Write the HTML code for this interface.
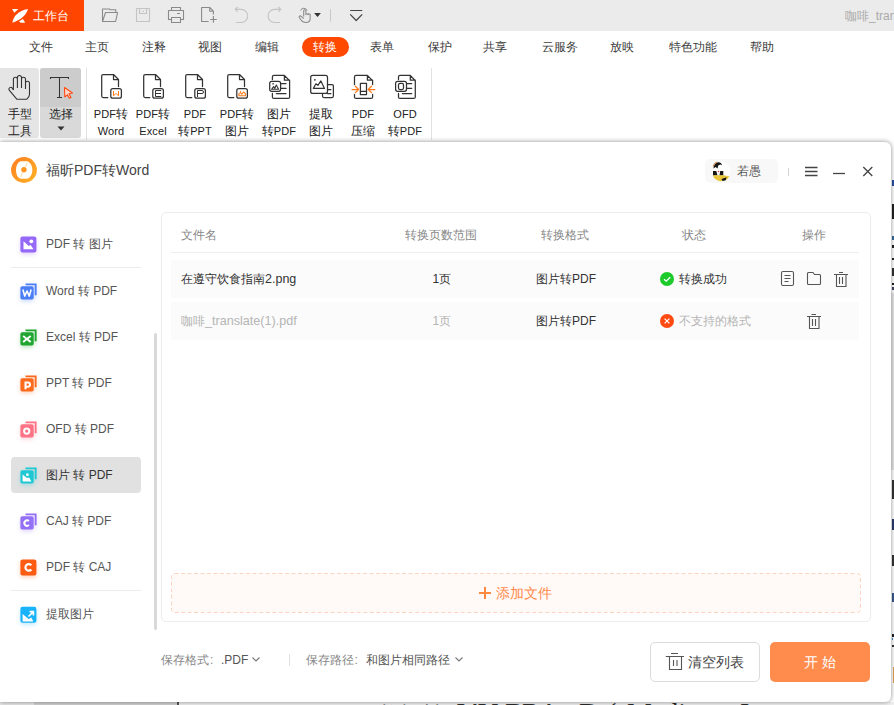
<!DOCTYPE html>
<html><head><meta charset="utf-8">
<style>
*{box-sizing:border-box;margin:0;padding:0}
html,body{width:894px;height:705px;overflow:hidden;background:#fff;font-family:"Liberation Sans",sans-serif;color:#333}
.a{position:absolute}
#tb{left:0;top:0;width:894px;height:31px;background:#ebebeb}
#tab{left:0;top:0;width:84px;height:31px;background:#ff4500;color:#fff;font-size:13px}
#menu{left:0;top:31px;width:894px;height:31px;background:#fff}
.mi{top:38.5px;font-size:12px;line-height:16px;color:#3c3c3c;white-space:nowrap}
#pill{left:301.5px;top:37px;width:47px;height:20px;border-radius:10px;background:#ff4800}
#rib{left:0;top:62px;width:894px;height:80px;background:#fff}
.rt{font-size:12px;line-height:17px;color:#222;text-align:center;white-space:nowrap}
#dlg{left:0;top:142px;width:891px;height:560px;background:#fff;border-radius:0 6px 6px 0;box-shadow:0 0 5px rgba(0,0,0,.45)}
.si{left:20px;width:17px;height:17px;border-radius:3px}
.st{left:46px;font-size:12px;line-height:16px;color:#444;white-space:nowrap}
.th{top:227px;font-size:12px;line-height:16px;color:#888;white-space:nowrap}
.rl{font-size:11px;letter-spacing:0.1px}
.l{font-size:12px;letter-spacing:0}
.td{font-size:12px;line-height:16px;color:#333;white-space:nowrap}
</style></head><body>
<!-- background document strips -->

<!-- title bar -->
<div id="tb" class="a"></div>
<div id="tab" class="a">
  <svg class="a" style="left:0;top:0" width="32" height="31" viewBox="0 0 32 31">
    <path d="M12.1 9.1 H18.3 L14.3 12.8 Z" fill="#fff"/>
    <path d="M12.4 22.8 C13.2 16.5 18 10.8 28 9.1 C26.5 14.5 21.5 19.8 12.4 22.8 Z" fill="#fff"/>
    <path d="M19 21.3 L23 19 L25.2 22.8 H20.5 Z" fill="#fff"/>
  </svg>
  <div class="a" style="left:33px;top:8px;font-size:12px;line-height:17px;color:#fff">工作台</div>
</div>
<svg class="a" style="left:96px;top:4px" width="280" height="24" viewBox="96 4 280 24" fill="none" stroke-linejoin="round">
  <g stroke="#8a8a8a" stroke-width="1.1">
  <path d="M102.5 21.5 V9 H109.3 L110.3 9.8 H115.8 V12.3"/>
  <path d="M102.5 21.5 L105.5 12.5 H117.6 L115.6 21.5 Z"/>
  <path d="M171.5 10.5 V7.5 H180.5 V10.5 M171.5 19.5 H168.5 V10.5 H183.5 V19.5 H180.5 M171.5 17.5 H180.5 V22.5 H171.5 Z M177 13.5 H180"/>
  <path d="M208.7 21.5 H201.6 V7.5 H209.7 L213.4 11.2 V14.5 M209.7 7.5 V11.2 H213.4 M213.4 16 V22.7 M210.2 19.5 H216.8"/>
  </g>
  <g stroke="#c4c4c4" stroke-width="1.1">
  <rect x="136.5" y="8.5" width="13" height="13"/>
  <path d="M139.5 8.5 V13.5 H146.5 V8.5 M142.3 11.2 H144"/>
  <path d="M235.2 9.4 H241.2 A6.55 6.55 0 0 1 241.2 22.5 H236 M237.7 7 L235.2 9.4 L237.7 11.8"/>
  <path d="M280.8 9.4 H274.6 A6.55 6.55 0 0 0 274.6 22.5 H280 M278.3 7 L280.8 9.4 L278.3 11.8"/>
  <path d="M330.5 9.2 V21.7" stroke="#c8c8c8" stroke-width="1"/>
  </g>
  <path d="M300.6 10.5 A3.4 3.4 0 0 1 307 10.5" stroke="#8a8a8a" stroke-width="1"/>
  <path d="M303.7 16.5 V10.8 A1.1 1.1 0 0 1 305.9 10.8 V14.5 A1.1 1.1 0 0 1 308 14.7 A1.1 1.1 0 0 1 310.2 15.5 V18.5 Q310.2 22.5 305.8 22.5 Q302.5 22.5 300.8 19.8 L299.3 17.5 A1.1 1.1 0 0 1 301.2 16.4 L303.7 18.5" stroke="#8a8a8a" stroke-width="1.05"/>
  <path d="M314.1 13 H320.9 L317.5 17.1 Z" fill="#333"/>
  <path d="M350.2 10.5 H362.2 M350.2 14.3 L356.2 20.5 L362.2 14.3" stroke="#444" stroke-width="1.2"/>
</svg>
<div class="a" style="left:845px;top:9px;font-size:12px;line-height:15px;color:#aaa;white-space:nowrap">咖啡_tran</div>

<!-- menu bar -->
<div id="menu" class="a"></div>
<div id="pill" class="a"></div>
<div class="a mi" style="left:28.5px">文件</div>
<div class="a mi" style="left:84.5px">主页</div>
<div class="a mi" style="left:141.5px">注释</div>
<div class="a mi" style="left:198px">视图</div>
<div class="a mi" style="left:255px">编辑</div>
<div class="a mi" style="left:313px;color:#fff">转换</div>
<div class="a mi" style="left:370px">表单</div>
<div class="a mi" style="left:427.5px">保护</div>
<div class="a mi" style="left:483px">共享</div>
<div class="a mi" style="left:541.5px">云服务</div>
<div class="a mi" style="left:610px">放映</div>
<div class="a mi" style="left:668.5px">特色功能</div>
<div class="a mi" style="left:750px">帮助</div>

<!-- ribbon -->
<div id="rib" class="a"></div>
<div class="a" style="left:0;top:68px;width:39px;height:70px;background:#e5e5e5;border-radius:0 3px 3px 0"></div>
<div class="a" style="left:40px;top:68px;width:41px;height:70px;background:#d9d9d9;border-radius:3px"></div>
<div class="a" style="left:40px;top:68px;width:41px;height:39px;background:#cccccc;border-radius:3px 3px 0 0"></div>
<div class="a" style="left:86px;top:68px;width:1px;height:72px;background:#e2e2e2"></div>
<div class="a" style="left:431px;top:68px;width:1px;height:72px;background:#e2e2e2"></div>
<div class="a rt" style="left:0;top:106px;width:39px">手型<br>工具</div>
<div class="a rt" style="left:40px;top:106px;width:41px">选择</div>
<svg class="a" style="left:0;top:66px" width="440" height="40" viewBox="0 66 440 40" fill="none">
  <!-- hand -->
  <path d="M13.4 90 V79.3 A2 2 0 0 1 17.4 79.3 V88 M17.4 79.3 V77.6 A2.05 2.05 0 0 1 21.5 77.6 V88 M21.5 79.3 A2 2 0 0 1 25.5 79.3 V89 M25.5 83.3 A2 2 0 0 1 29.5 83.3 V94.5 Q29.5 96.5 26.8 99.2 H16.8 L9.2 90.2 A1.8 1.8 0 0 1 12.3 88.2 L13.4 90" stroke="#333" stroke-width="1.1" stroke-linejoin="round" fill="none"/>
  <!-- T -->
  <path d="M50.5 79 V77.5 H68.5 V79 M59.5 77.5 V97.5 M57 97.5 H62" stroke="#333" stroke-width="1.05"/>
  <path d="M64.5 87.5 L72.5 93 L69 93.8 L71 97.5 L69.3 98.3 L67.4 94.8 L64.8 97 Z" fill="#ffd8cc" stroke="#ff4a10" stroke-width="1.1" stroke-linejoin="round"/>
</svg>
<svg class="a" style="left:57px;top:126px" width="8" height="5" viewBox="0 0 8 5"><path d="M0.5 0.5 H7.5 L4 4.5 Z" fill="#333"/></svg>

<!--RIB-->
<svg class="a" style="left:0;top:70px" width="440" height="32" viewBox="0 0 440 32" fill="none" stroke="#333" stroke-width="1.25" stroke-linejoin="round" stroke-linecap="round">
<g transform="translate(96 0)"><path d="M11.8 27.5 H7.2 Q5.7 27.5 5.7 26 V6 Q5.7 4.5 7.2 4.5 H17.5 L22.5 9.5 V16.6 M17.5 4.5 V9.5 H22.5"/><rect x="14.8" y="18.7" width="10.6" height="9.5" rx="2"/><path stroke="#ff7a1a" stroke-width="1" stroke-linecap="butt" d="M17.5 21 V25.8 L19.6 23.8 H20.4 L22.5 25.8 V21"/></g>
<g transform="translate(138 0)"><path d="M11.8 27.5 H7.2 Q5.7 27.5 5.7 26 V6 Q5.7 4.5 7.2 4.5 H17.5 L22.5 9.5 V16.6 M17.5 4.5 V9.5 H22.5"/><rect x="14.8" y="18.7" width="10.6" height="9.5" rx="2"/><path stroke-width="1" stroke-linecap="butt" d="M23.3 20.5 H17.5 V26.5 H23.3 M17.5 23.5 H23"/></g>
<g transform="translate(180 0)"><path d="M11.8 27.5 H7.2 Q5.7 27.5 5.7 26 V6 Q5.7 4.5 7.2 4.5 H17.5 L22.5 9.5 V16.6 M17.5 4.5 V9.5 H22.5"/><rect x="14.8" y="18.7" width="10.6" height="9.5" rx="2"/><path stroke-width="1" stroke-linecap="butt" d="M17.5 27 V20.5 H22 Q23.5 20.5 23.5 22 Q23.5 23.5 22 23.5 H17.5"/></g>
<g transform="translate(222 0)"><path d="M11.8 27.5 H7.2 Q5.7 27.5 5.7 26 V6 Q5.7 4.5 7.2 4.5 H17.5 L22.5 9.5 V16.6 M17.5 4.5 V9.5 H22.5"/><rect x="14.8" y="18.7" width="10.6" height="9.5" rx="2"/><path stroke="#ff7a1a" stroke-width="1.1" d="M16.9 23.6 V25.8 H23.4 V23.6 L21.6 22 L19.8 24.2 L18.6 22.6 Z"/><circle cx="18.5" cy="21.3" r="0.6" fill="#ff7a1a" stroke="none"/></g>
<g transform="translate(264 0)"><path d="M8.4 9.5 V7 Q8.4 5.45 9.9 5.45 H20.4 L25.6 10.6 V26.9 Q25.6 28.4 24.1 28.4 H9.9 Q8.4 28.4 8.4 26.9 V23.4 M20.4 5.45 V10.2 H25.6"/><rect x="5.7" y="11.35" width="10.9" height="9.95" rx="2"/><path d="M16.6 13.5 H22 M16.6 18.4 H22 M12.3 23.5 H22"/><rect x="8.4" y="13.1" width="1.4" height="1.4" fill="#333" stroke="none"/><path stroke-width="1.1" d="M7.6 19.3 L9.6 16.6 L10.8 18.2 L12.3 15 L14.6 19.3 Z"/></g>
<g transform="translate(305 0)"><path d="M22.5 14.5 H27 Q28.4 14.5 28.4 16 V26 Q28.4 27.5 27 27.5 H19 Q17.5 27.5 17.5 26 V23.5 M22.5 19.5 H25.9 M22.5 23.5 H25.9"/><rect x="5.7" y="5.45" width="16.8" height="17.95" rx="2"/><rect x="9.1" y="9.1" width="1.5" height="1.5" fill="#333" stroke="none"/><path stroke-width="1.2" d="M8.4 18.4 L10.9 13.8 L12.9 15.4 L15.9 10.9 L19.5 18.4 Z"/></g>
<g transform="translate(347 0)"><path d="M7.5 14.5 V7 Q7.5 5.45 9 5.45 H20.4 L25.6 10.6 V14.5 M20.4 5.45 V10.2 H25.6 M7.5 24.3 V26.9 Q7.5 28.4 9 28.4 H24.1 Q25.6 28.4 25.6 26.9 V24.3"/><rect x="13.4" y="13.4" width="6.1" height="11.1"/><path d="M13.4 21.3 H19.5"/><path stroke="#ff7a1a" d="M5 19.5 H11.3 M8.4 16.2 L11.6 19.5 L8.4 22.6 M27.9 19.5 H21.4 M24.5 16.2 L21.2 19.5 L24.5 22.6"/></g>
<g transform="translate(389 0)"><path d="M9.5 9.5 V7 Q9.5 5.45 11 5.45 H21.3 L26.3 10.6 V26.9 Q26.3 28.4 24.8 28.4 H11 Q9.5 28.4 9.5 26.9 V23.4 M21.3 5.45 V10.2 H26.3"/><rect x="6.6" y="11.35" width="10.9" height="9.95" rx="2"/><rect x="9.5" y="13.4" width="5" height="6.1" rx="1.5"/><path d="M17.5 13.5 H22.7 M17.5 18.4 H22.7 M13.4 23.5 H22.7"/></g>
</svg>
<div class="a rt" style="left:90px;top:106px;width:42px"><span class="rl">PDF</span>转<br><span class="rl">Word</span></div>
<div class="a rt" style="left:132px;top:106px;width:42px"><span class="rl">PDF</span>转<br><span class="rl">Excel</span></div>
<div class="a rt" style="left:174px;top:106px;width:42px"><span class="rl">PDF</span><br>转<span class="rl">PPT</span></div>
<div class="a rt" style="left:216px;top:106px;width:42px"><span class="rl">PDF</span>转<br>图片</div>
<div class="a rt" style="left:258px;top:106px;width:42px">图片<br>转<span class="rl">PDF</span></div>
<div class="a rt" style="left:300px;top:106px;width:42px">提取<br>图片</div>
<div class="a rt" style="left:342px;top:106px;width:42px"><span class="rl">PDF</span><br>压缩</div>
<div class="a rt" style="left:384px;top:106px;width:42px"><span class="rl">OFD</span><br>转<span class="rl">PDF</span></div>
<!--/RIB-->


<!-- dialog -->
<div class="a" style="left:891px;top:142px;width:3px;height:563px;background:#fff"></div>
<div class="a" style="left:891px;top:293px;width:3px;height:177px;background:#e6e6e6"></div>
<div class="a" style="left:892px;top:180px;width:2px;height:6px;background:#2a50a0"></div>
<div class="a" style="left:892px;top:204px;width:2px;height:15px;background:#222"></div>
<div class="a" style="left:892px;top:236px;width:2px;height:4px;background:#3a6a9a"></div>
<div class="a" style="left:892px;top:245px;width:2px;height:3px;background:#222"></div>
<div class="a" style="left:892px;top:258px;width:2px;height:2px;background:#222"></div>
<div class="a" style="left:892px;top:268px;width:2px;height:8px;background:#333"></div>
<div class="a" style="left:892px;top:283px;width:2px;height:2px;background:#222"></div>
<div class="a" style="left:892px;top:287px;width:2px;height:3px;background:#446"></div>
<div class="a" style="left:892px;top:480px;width:2px;height:19px;background:#333"></div>
<div class="a" style="left:892px;top:519px;width:2px;height:11px;background:#2a3a6a"></div>
<div class="a" style="left:892px;top:555px;width:2px;height:11px;background:#333"></div>
<div class="a" style="left:892px;top:593px;width:2px;height:9px;background:#3a5a8a"></div>
<div class="a" style="left:892px;top:634px;width:2px;height:3px;background:#222"></div>
<div class="a" style="left:892px;top:638px;width:1px;height:2px;background:#3a8ad0"></div>
<div class="a" style="left:892px;top:645px;width:2px;height:2px;background:#333"></div>
<div class="a" style="left:893px;top:667px;width:1px;height:16px;background:#e0a050"></div>
<div class="a" style="left:0;top:702px;width:894px;height:3px;overflow:hidden;background:#f0f0f0">
  <div class="a" style="left:0;top:0;width:34px;height:3px;background:#e8e8e8"></div>
  <div class="a" style="left:34px;top:0;width:143px;height:3px;background:#d2d2d2"></div>
  <div class="a" style="left:177px;top:0;width:1.5px;height:3px;background:#555"></div>
  <div class="a" style="left:0;top:-4.5px;width:894px;height:30px;font-family:'Liberation Serif',serif;font-size:28px;line-height:30px;color:#2a2a2a;white-space:nowrap">
    <span class="a" style="left:378px;top:2px;font-size:22px">数据转</span><span class="a" style="left:454px">J</span><span class="a" style="left:465px">A</span><span class="a" style="left:478px">V</span><span class="a" style="left:505px">B</span><span class="a" style="left:522px">R</span><span class="a" style="left:539px">A</span><span class="a" style="left:579px">D</span><span class="a" style="left:607px">(</span><span class="a" style="left:627px">Medium</span><span class="a" style="left:740px">Instrument</span></div>
</div>

<div id="dlg" class="a"></div>
<!-- dialog header -->
<svg class="a" style="left:11px;top:157px" width="26" height="26" viewBox="0 0 26 26">
  <defs><linearGradient id="lg" x1="0" y1="0" x2="1" y2="1"><stop offset="0" stop-color="#ff7d22"/><stop offset="1" stop-color="#ffb426"/></linearGradient></defs>
  <circle cx="13" cy="13" r="12.9" fill="url(#lg)"/>
  <path d="M5 13 Q5 6.2 9.5 4.2 L16.5 4.2 Q21.2 6.5 21.4 13 Q21.2 19.6 16.5 21.8 L9.5 21.8 Q5 19.8 5 13 Z" fill="#fff"/>
  <circle cx="12.9" cy="12.8" r="2.7" fill="#ff961e"/>
  <path d="M9.8 20 L11.4 15.5 M14.5 10 L16.2 5.8" stroke="#ffd2a0" stroke-width="0.9" fill="none"/>
</svg>
<div class="a" style="left:46px;top:161px;font-size:14px;line-height:18px;color:#444;white-space:nowrap">福昕PDF转Word</div>

<div class="a" style="left:705px;top:159px;width:73px;height:24px;background:#f8f8f8;border-radius:5px"></div>
<svg class="a" style="left:708px;top:158px" width="26" height="26" viewBox="0 0 26 26">
  <circle cx="13" cy="13" r="9" fill="#fff"/>
  <path d="M5.5 10.5 Q5.5 4.5 10 4.2 Q13.5 4 14 7.2 L12.3 6.6 L10.2 7.6 L9.6 10.5 L7.6 9 Z" fill="#151515"/>
  <path d="M5.3 9 Q6 5 9.5 4.2" stroke="#c9936a" stroke-width="1.2" fill="none"/>
  <path d="M5 13 H8.3 L9.5 17.5 H5 Z M12.2 13 H15.3 V17.5 H11.5 Z" fill="#151515"/>
  <path d="M9.3 13 H11.6 L10.8 15.5 H9.9 Z" fill="#fff"/>
  <circle cx="10.5" cy="13.6" r="0.8" fill="#e24b4b"/>
  <path d="M5 17.3 H15.5 L21.3 18.3 Q19.5 22.6 12.5 23.2 Q6.3 22.5 5 17.3 Z" fill="#e9c63c"/>
  <path d="M13.5 21 L18.5 19.2 L17.8 22.3 L14.5 23 Z" fill="#151515"/>
</svg>
<div class="a" style="left:737px;top:163px;font-size:12px;line-height:16px;color:#555;white-space:nowrap">若愚</div>
<div class="a" style="left:788px;top:168px;width:1px;height:8px;background:#d5d5d5"></div>
<svg class="a" style="left:800px;top:160px" width="80" height="22" viewBox="800 160 80 22" fill="none" stroke="#444" stroke-width="1.3">
  <path d="M805 167.5 H817.5 M805 171.5 H817.5 M805 175.5 H817.5"/>
  <path d="M833 173.5 H845"/>
  <path d="M863.3 167 L872.3 176 M872.3 167 L863.3 176"/>
</svg>

<!--SB-->
<div class="a" style="left:11px;top:457px;width:130px;height:36px;background:#e1e1e1;border-radius:4px"></div>
<div class="a" style="left:11px;top:267px;width:130px;height:1px;background:#ececec"></div>
<div class="a" style="left:11px;top:590px;width:130px;height:1px;background:#ececec"></div>
<div class="a" style="left:154px;top:333px;width:3px;height:297px;background:#d9d9d9;border-radius:1.5px"></div>
<svg class="a" style="left:20.1px;top:235.7px;filter:drop-shadow(0 2px 2px rgba(150,104,247,.28))" width="18" height="18" viewBox="0 0 18 18"><rect x="0.4" y="0.4" width="16" height="16" rx="2.2" fill="#9668f7"/><path d="M3.5 5.3 V13.3 H13.5 L10.6 8.9 L8.8 10.1 Z" fill="#fff"/><circle cx="11.3" cy="5.3" r="1.9" fill="#fff"/></svg>
<div class="a st" style="top:236.0px;color:#555"><span class="l">PDF</span> 转 图片</div>
<svg class="a" style="left:20.1px;top:282.7px;filter:drop-shadow(0 2px 2px rgba(75,126,247,.28))" width="18" height="18" viewBox="0 0 18 18"><path d="M5.5 1.35 H15.65 V12.3" stroke="#4b7ef7" stroke-width="1.9" fill="none"/><rect x="0.4" y="3.3" width="13.3" height="13.3" rx="1.8" fill="#4b7ef7"/><path d="M2.9 6.5 L4.7 13.1 L7 8 L9.3 13.1 L11.1 6.5" stroke="#fff" stroke-width="1.6" fill="none" stroke-linejoin="round"/></svg>
<div class="a st" style="top:283.0px;color:#555"><span class="l">Word</span> 转 <span class="l">PDF</span></div>
<svg class="a" style="left:20.1px;top:328.7px;filter:drop-shadow(0 2px 2px rgba(31,165,48,.28))" width="18" height="18" viewBox="0 0 18 18"><path d="M5.5 1.35 H15.65 V12.3" stroke="#1fa530" stroke-width="1.9" fill="none"/><rect x="0.4" y="3.3" width="13.3" height="13.3" rx="1.8" fill="#1fa530"/><path d="M3.1 6.9 L10.7 13.1 M10.7 6.9 L3.1 13.1" stroke="#fff" stroke-width="1.9" fill="none"/></svg>
<div class="a st" style="top:329.0px;color:#555"><span class="l">Excel</span> 转 <span class="l">PDF</span></div>
<svg class="a" style="left:20.1px;top:374.7px;filter:drop-shadow(0 2px 2px rgba(252,106,30,.28))" width="18" height="18" viewBox="0 0 18 18"><path d="M5.5 1.35 H15.65 V12.3" stroke="#fc6a1e" stroke-width="1.9" fill="none"/><rect x="0.4" y="3.3" width="13.3" height="13.3" rx="1.8" fill="#fc6a1e"/><path d="M5.5 14.2 V7.4 H7.9 Q10 7.4 10 9.55 Q10 11.7 7.9 11.7 H5.5" stroke="#fff" stroke-width="2" fill="none"/></svg>
<div class="a st" style="top:375.0px;color:#555"><span class="l">PPT</span> 转 <span class="l">PDF</span></div>
<svg class="a" style="left:20.1px;top:420.7px;filter:drop-shadow(0 2px 2px rgba(253,116,135,.28))" width="18" height="18" viewBox="0 0 18 18"><path d="M5.5 1.35 H15.65 V12.3" stroke="#fd7487" stroke-width="1.9" fill="none"/><rect x="0.4" y="3.3" width="13.3" height="13.3" rx="1.8" fill="#fd7487"/><circle cx="6.7" cy="10.1" r="2.6" stroke="#fff" stroke-width="2" fill="none"/></svg>
<div class="a st" style="top:421.0px;color:#555"><span class="l">OFD</span> 转 <span class="l">PDF</span></div>
<svg class="a" style="left:20.1px;top:466.7px;filter:drop-shadow(0 2px 2px rgba(29,200,211,.28))" width="18" height="18" viewBox="0 0 18 18"><path d="M5.5 1.35 H15.65 V12.3" stroke="#1dc8d3" stroke-width="1.9" fill="none"/><rect x="0.4" y="3.3" width="13.3" height="13.3" rx="1.8" fill="#1dc8d3"/><path d="M2.6 7.4 V14.4 H11.5 L9.1 10.4 L7 11.1 Z" fill="#fff"/><circle cx="7.4" cy="7.7" r="1.35" fill="#fff"/></svg>
<div class="a st" style="top:467.0px;color:#333">图片 转 <span class="l">PDF</span></div>
<svg class="a" style="left:20.1px;top:512.7px;filter:drop-shadow(0 2px 2px rgba(148,112,246,.28))" width="18" height="18" viewBox="0 0 18 18"><path d="M5.5 1.35 H15.65 V12.3" stroke="#9470f6" stroke-width="1.9" fill="none"/><rect x="0.4" y="3.3" width="13.3" height="13.3" rx="1.8" fill="#9470f6"/><path d="M8.9 8.1 A2.7 2.7 0 1 0 8.9 12.1" stroke="#fff" stroke-width="2" fill="none"/></svg>
<div class="a st" style="top:513.0px;color:#555"><span class="l">CAJ</span> 转 <span class="l">PDF</span></div>
<svg class="a" style="left:20.1px;top:558.7px;filter:drop-shadow(0 2px 2px rgba(253,90,18,.28))" width="18" height="18" viewBox="0 0 18 18"><rect x="0.4" y="0.4" width="16" height="16" rx="2.2" fill="#fd5a12"/><path d="M11.3 6.3 A3.3 3.3 0 1 0 11.3 10.5" stroke="#fff" stroke-width="2.2" fill="none"/></svg>
<div class="a st" style="top:559.0px;color:#555"><span class="l">PDF</span> 转 <span class="l">CAJ</span></div>
<svg class="a" style="left:20.1px;top:605.7px;filter:drop-shadow(0 2px 2px rgba(26,178,248,.28))" width="18" height="18" viewBox="0 0 18 18"><rect x="0.4" y="0.8" width="16" height="16" rx="2.2" fill="#1ab2f8"/><path d="M2.6 8 V15.5 H13.3 L11.3 11.6 L8.6 13.1 Z" fill="#fff"/><path d="M8.5 10.5 L12.8 6.2 M9.6 5.6 H13.4 V9.4" stroke="#fff" stroke-width="1.6" fill="none"/></svg>
<div class="a st" style="top:606.0px;color:#555">提取图片</div>
<!--/SB-->


<!-- table container -->
<div class="a" style="left:161px;top:212px;width:710px;height:410px;border:1px solid #ececec;border-radius:5px"></div>
<div class="a th" style="left:181px">文件名</div>
<div class="a th" style="left:404.5px">转换页数范围</div>
<div class="a th" style="left:540.5px">转换格式</div>
<div class="a th" style="left:682px">状态</div>
<div class="a th" style="left:802px">操作</div>
<div class="a" style="left:171px;top:252px;width:688px;height:1px;background:#efefef"></div>
<div class="a" style="left:171px;top:260px;width:688px;height:38px;background:#fbfbfb"></div>
<div class="a" style="left:171px;top:302px;width:688px;height:38px;background:#fbfbfb"></div>

<div class="a td" style="left:181px;top:271px">在遵守饮食指南<span style="font-size:12.5px">2.png</span></div>
<div class="a td" style="left:432.5px;top:271px">1页</div>
<div class="a td" style="left:536px;top:271px">图片转PDF</div>
<svg class="a" style="left:660px;top:272px" width="14" height="14" viewBox="0 0 14 14"><circle cx="7" cy="7" r="7" fill="#1ccb2b"/><path d="M4 7.2 L6.2 9.2 L10.2 5.2" stroke="#fff" stroke-width="1.3" fill="none"/></svg>
<div class="a td" style="left:678.5px;top:271px">转换成功</div>
<svg class="a" style="left:778px;top:268px" width="74" height="22" viewBox="778 268 74 22" fill="none" stroke="#555" stroke-width="1.1" stroke-linejoin="round">
  <rect x="781.5" y="271.5" width="12" height="14" rx="1.5"/>
  <path d="M784.5 275.5 H790.5 M784.5 278.5 H790.5 M784.5 281.5 H788.5"/>
  <path d="M807.5 283.5 V273.5 Q807.5 272.5 808.5 272.5 H813 L814.5 274.5 H819.5 Q820.5 274.5 820.5 275.5 V283.5 Q820.5 284.5 819.5 284.5 H808.5 Q807.5 284.5 807.5 283.5 Z"/>
  <path d="M834 274.5 H848 M839 272.5 H843 M836.5 274.5 V286.5 H846 V274.5 M839.5 277 V284 M842.5 277 V284" stroke-linejoin="miter"/>
</svg>

<div class="a td" style="left:181px;top:312.5px;color:#b5b5b5">咖啡<span style="font-size:12.6px">_translate(1).pdf</span></div>
<div class="a td" style="left:432.5px;top:312.5px;color:#b5b5b5">1页</div>
<div class="a td" style="left:536px;top:312.5px">图片转PDF</div>
<svg class="a" style="left:660px;top:313.7px" width="14" height="14" viewBox="0 0 14 14"><circle cx="7" cy="7" r="7" fill="#ff4a12"/><path d="M4.6 4.6 L9.4 9.4 M9.4 4.6 L4.6 9.4" stroke="#fff" stroke-width="1.2" fill="none"/></svg>
<div class="a td" style="left:678.5px;top:312.5px;color:#b5b5b5">不支持的格式</div>
<svg class="a" style="left:800px;top:310px" width="30" height="22" viewBox="800 310 30 22" fill="none" stroke="#555" stroke-width="1.1">
  <path d="M807 316.5 H821 M811.5 314.5 H816 M809.5 316.5 V328.5 H819 V316.5 M812.5 319 V326 M815.5 319 V326"/>
</svg>

<!-- add file -->
<svg class="a" style="left:170px;top:572px" width="692" height="42" viewBox="0 0 692 42"><rect x="1.5" y="1.5" width="689" height="39" rx="3" fill="#fffaf7" stroke="#fdd5bf" stroke-width="1" stroke-dasharray="4 2.5"/></svg>
<svg class="a" style="left:478px;top:586px" width="14" height="14" viewBox="0 0 14 14"><path d="M7 1 V13 M1 7 H13" stroke="#ff8a3d" stroke-width="2"/></svg>
<div class="a" style="left:495.5px;top:585px;font-size:14px;line-height:17px;color:#ff8a4c;white-space:nowrap">添加文件</div>

<!-- footer -->
<div class="a" style="left:161px;top:652px;font-size:12px;line-height:16px;color:#888;white-space:nowrap">保存格式<span style="display:inline-block;width:12px;padding-left:1px;color:#888">:</span><span style="color:#555">.PDF</span></div>
<svg class="a" style="left:251px;top:656px" width="10" height="7" viewBox="0 0 10 7"><path d="M1.5 1.5 L5 5 L8.5 1.5" stroke="#777" stroke-width="1.1" fill="none"/></svg>
<div class="a" style="left:289px;top:654px;width:1px;height:12px;background:#e0e0e0"></div>
<div class="a" style="left:305.5px;top:652px;font-size:12px;line-height:16px;color:#888;white-space:nowrap">保存路径<span style="display:inline-block;width:12px;padding-left:1px;color:#888">:</span><span style="color:#555">和图片相同路径</span></div>
<svg class="a" style="left:454px;top:656px" width="10" height="7" viewBox="0 0 10 7"><path d="M1.5 1.5 L5 5 L8.5 1.5" stroke="#777" stroke-width="1.1" fill="none"/></svg>

<div class="a" style="left:650px;top:642px;width:110px;height:40px;border:1px solid #dcdcdc;border-radius:5px;background:#fff"></div>
<svg class="a" style="left:660px;top:650px" width="30" height="22" viewBox="660 650 30 22" fill="none" stroke="#555" stroke-width="1.1"><path d="M665.8 656.5 H684 M671 653.5 H678 M669.5 656.5 V669.5 H681.5 V656.5 M673.5 660 V666 M677 660 V666"/></svg>
<div class="a" style="left:688px;top:654px;font-size:13.5px;line-height:17px;color:#444;white-space:nowrap">清空列表</div>
<div class="a" style="left:770px;top:642px;width:99.5px;height:40px;background:#ff8c4d;border-radius:5px"></div>
<div class="a" style="left:770px;top:654px;width:99.5px;text-align:center;font-size:13.5px;line-height:17px;color:#fff;white-space:nowrap">开&nbsp;始</div>

<!-- right background doc fragments -->
</body></html>
